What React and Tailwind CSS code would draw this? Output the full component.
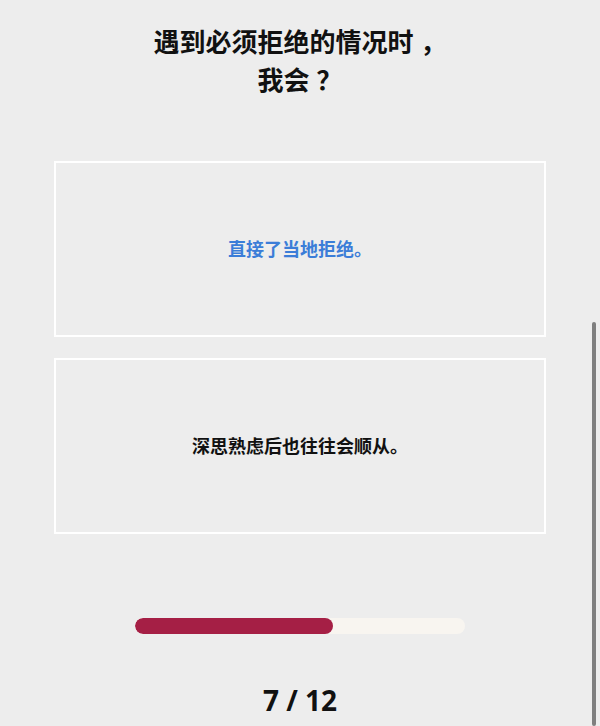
import React from 'react';

const options = [
  { id: 1, text: '直接了当地拒绝。', selected: true },
  { id: 2, text: '深思熟虑后也往往会顺从。', selected: false },
];

const App = () => {
  const current = 7;
  const total = 12;

  return (
    <div
      className="relative w-[600px] h-[726px] overflow-hidden bg-[#ededed]"
      style={{ fontFamily: '"Open Sans", "Noto Sans CJK SC", sans-serif' }}
    >
      <div className="flex flex-col items-center">
        <h1 className="mt-[23px] text-[26px] leading-[38px] font-bold text-[#111] text-center">
          遇到必须拒绝的情况时 ，
          <br />
          我会 ？
        </h1>

        <div className="mt-[62px] w-[492px] flex flex-col gap-[21px]">
          {options.map((opt) => (
            <div
              key={opt.id}
              className="h-[176px] border-2 border-white flex items-center justify-center"
            >
              <span
                className={`text-[18px] font-bold ${opt.selected ? 'text-[#3b7dd8]' : 'text-[#111]'}`}
              >
                {opt.text}
              </span>
            </div>
          ))}
        </div>

        <div className="mt-[84px] w-[330px] h-[16px] rounded-full bg-[#f8f5f0] overflow-hidden">
          <div className="h-full w-[198px] rounded-full bg-[#a51f45]" />
        </div>

        <div className="mt-[46px] text-[28px] font-bold text-[#111] leading-[40px]">
          {current} / {total}
        </div>
      </div>

      <div className="absolute right-[4px] top-[322px] bottom-0 w-[4px] rounded-full bg-[#7f7f7f]" />
    </div>
  );
};

export default App;
